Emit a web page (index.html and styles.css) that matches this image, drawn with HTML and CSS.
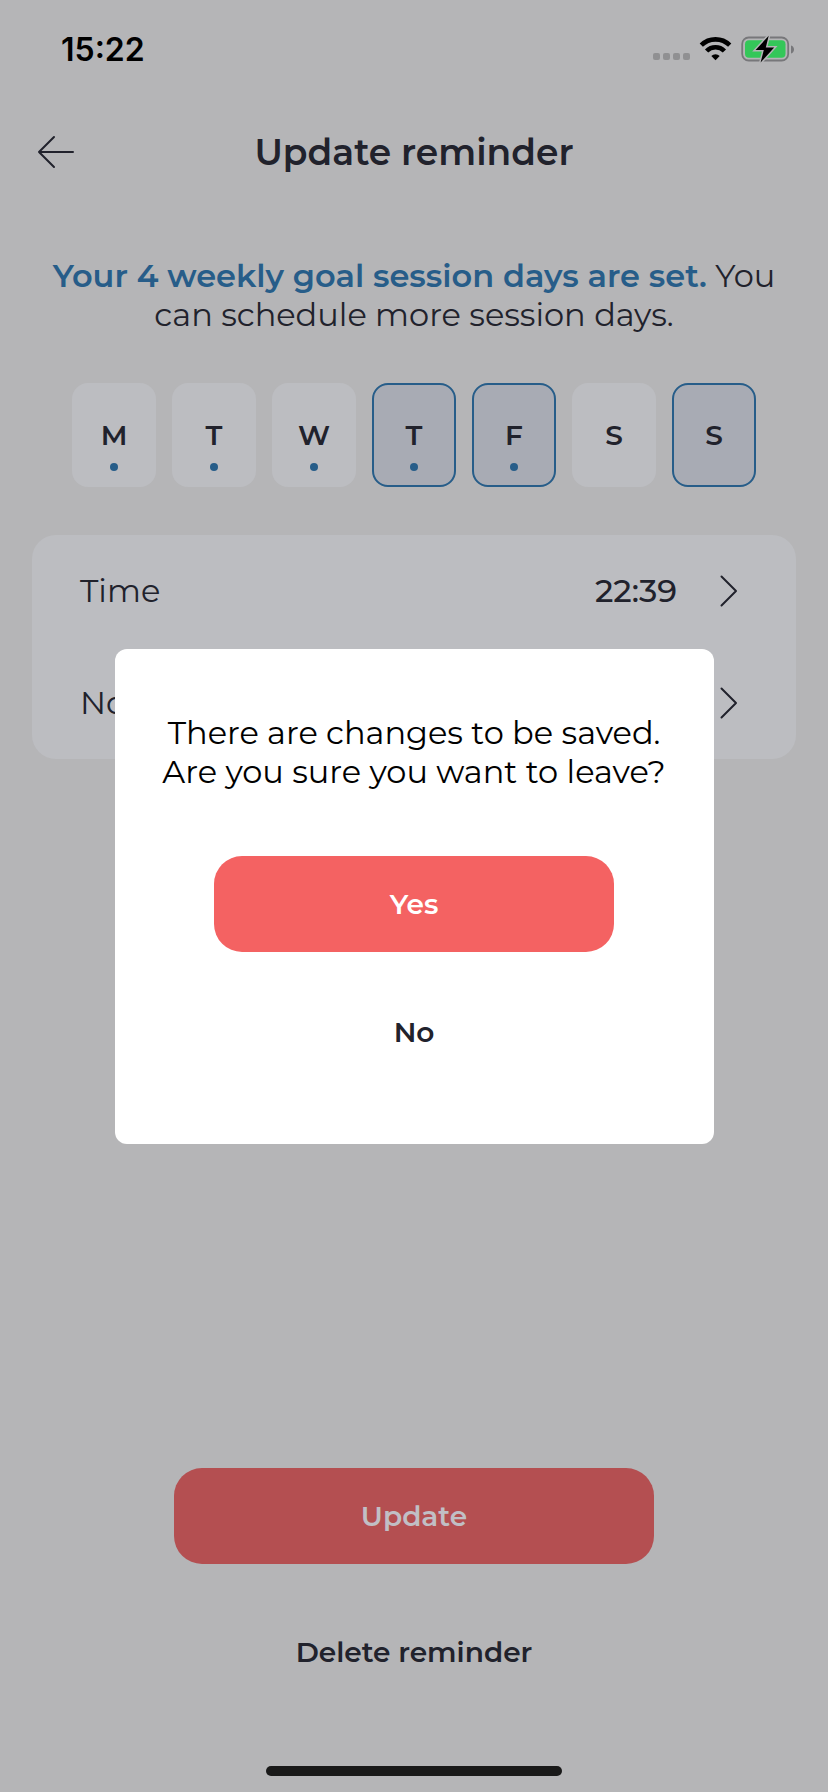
FILE: index.html
```html
<!DOCTYPE html>
<html lang="en">
<head>
<meta charset="utf-8">
<title>Update reminder</title>
<link rel="stylesheet" href="styles.css">
</head>
<body>
<div class="screen">
  <header class="status">
    <span class="clock">15:22</span>
    <svg class="status-icons" width="142" height="28" viewBox="0 0 142 28">
      <g fill="#909092"><rect x="0" y="17" width="7" height="7" rx="2"/><rect x="10" y="17" width="7" height="7" rx="2"/><rect x="20" y="17" width="7" height="7" rx="2"/><rect x="30" y="17" width="7" height="7" rx="2"/></g>
      <g fill="none" stroke="#000" stroke-width="4.6"><path d="M48.3 9.2a20.2 20.2 0 0 1 28.400 0"/><path d="M53.6 15a12.500 12.500 0 0 1 17.800 0"/></g>
      <path d="M62.500 24.200l-4.200-4.300a6 6 0 0 1 8.400 0z"/>
      <rect x="89.200" y="1.500" width="46" height="23" rx="6.500" fill="none" stroke="#77777a" stroke-width="1.800"/>
      <rect x="92" y="4.200" width="40.500" height="17.600" rx="4" fill="#34c759"/>
      <path d="M138 9.500c4 1 4 7 0 8z" fill="#77777a"/>
      <path d="M115.700-.2L102.600 14h8.200l-3.200 12.500L121.200 11.500h-8.400z" fill="#000" stroke="#b5b5b7" stroke-width="3" paint-order="stroke"/>
    </svg>
  </header>
  <nav class="nav">
    <svg class="back" width="40" height="36" viewBox="0 0 40 36" fill="none" stroke="#21222c" stroke-width="2" stroke-linecap="round" stroke-linejoin="round"><path d="M37 18H3M18 3L3 18l15 15"/></svg>
    <h1 class="title">Update reminder</h1>
  </nav>
  <p class="intro"><b class="goal">Your 4 weekly goal session days are set.</b> You<br>can schedule more session days.</p>
  <div class="days">
    <div class="day dot">M</div><div class="day dot">T</div><div class="day dot">W</div><div class="day dot on">T</div><div class="day dot on">F</div><div class="day">S</div><div class="day on">S</div>
  </div>
  <section class="card">
    <div class="row"><span class="label">Time</span><span class="value">22:39</span><svg class="chevron" width="20" height="34" viewBox="0 0 20 34"><path d="M2.500 2.500L17 17 2.500 31.500"/></svg></div>
    <div class="row"><span class="label">Notes</span><svg class="chevron" width="20" height="34" viewBox="0 0 20 34"><path d="M2.500 2.500L17 17 2.500 31.500"/></svg></div>
  </section>
  <footer class="actions">
    <button class="btn update">Update</button>
    <button class="btn plain delete">Delete reminder</button>
    <div class="home"></div>
  </footer>
  <div class="dialog">
    <p class="message">There are changes to be saved.<br>Are you sure you want to leave?</p>
    <button class="btn yes">Yes</button>
    <button class="btn plain no">No</button>
  </div>
</div>
</body>
</html>
```
FILE: styles.css
```css
* { box-sizing: border-box; }
body { margin: 0; background: #b5b5b7; }
.screen {
  position: relative;
  display: flex;
  flex-direction: column;
  width: 828px;
  height: 1792px;
  overflow: hidden;
  background: #b5b5b7;
  color: #21222c;
  font-family: Montserrat, Inter, sans-serif;
  font-size: 32px;
}
.status {
  display: flex;
  justify-content: space-between;
  align-items: center;
  height: 100px;
  padding: 0 33px 0 61px;
}
.clock { font: 600 32px/40px Inter, sans-serif; color: #000; }
.status-icons { overflow: visible; }
.nav { position: relative; display: flex; justify-content: center; align-items: center; height: 104px; }
.back { position: absolute; left: 36px; top: 34px; }
.title { margin: 0; font-size: 36px; font-weight: 600; }
.intro { margin: 52px 0 0; text-align: center; line-height: 39px; font-weight: 400; white-space: nowrap; }
.goal { font-weight: 600; color: #275d89; }
.days { display: flex; justify-content: center; gap: 16px; margin-top: 49px; }
.day {
  position: relative;
  display: flex;
  justify-content: center;
  align-items: center;
  width: 84px;
  height: 104px;
  border-radius: 16px;
  background: #bcbdc1;
  font-size: 28px;
  font-weight: 600;
}
.on { background: #a8abb4; border: 2px solid #275d89; }
.dot::after { content: ""; position: absolute; left: 50%; bottom: 16px; width: 8px; height: 8px; margin-left: -4px; border-radius: 50%; background: #275d89; }
.dot.on::after { bottom: 14px; }
.card { margin: 48px 32px 0; border-radius: 24px; background: #bcbdc1; }
.row { display: flex; align-items: center; height: 112px; padding: 0 57px 0 48px; line-height: 38px; }
.label { flex: 1; font-weight: 400; }
.value { margin-right: 42px; font-weight: 500; }
.chevron { fill: none; stroke: #21222c; stroke-width: 2; stroke-linecap: round; stroke-linejoin: round; }
.actions { display: flex; flex-direction: column; align-items: center; margin-top: auto; padding-bottom: 16px; }
.btn { height: 96px; padding: 0; border: 0; border-radius: 28px; color: #fff; background: #f46262; font: 600 28px/96px Montserrat, Inter, sans-serif; }
.update { width: 480px; color: #c1bfc5; background: #b44f51; }
.plain { color: #21222c; background: none; }
.delete { margin-top: 40px; }
.home { width: 296px; height: 10px; margin-top: 66px; border-radius: 5px; background: #191919; }
.dialog {
  position: absolute;
  left: 115px;
  top: 649px;
  display: flex;
  flex-direction: column;
  align-items: center;
  width: 599px;
  height: 495px;
  padding: 64px 1px 0 0;
  border-radius: 12px;
  background: #fff;
}
.message { margin: 0; color: #000; text-align: center; line-height: 39px; font-weight: 400; white-space: nowrap; }
.yes { width: 400px; margin-top: 65px; }
.no { margin-top: 32px; }
```
